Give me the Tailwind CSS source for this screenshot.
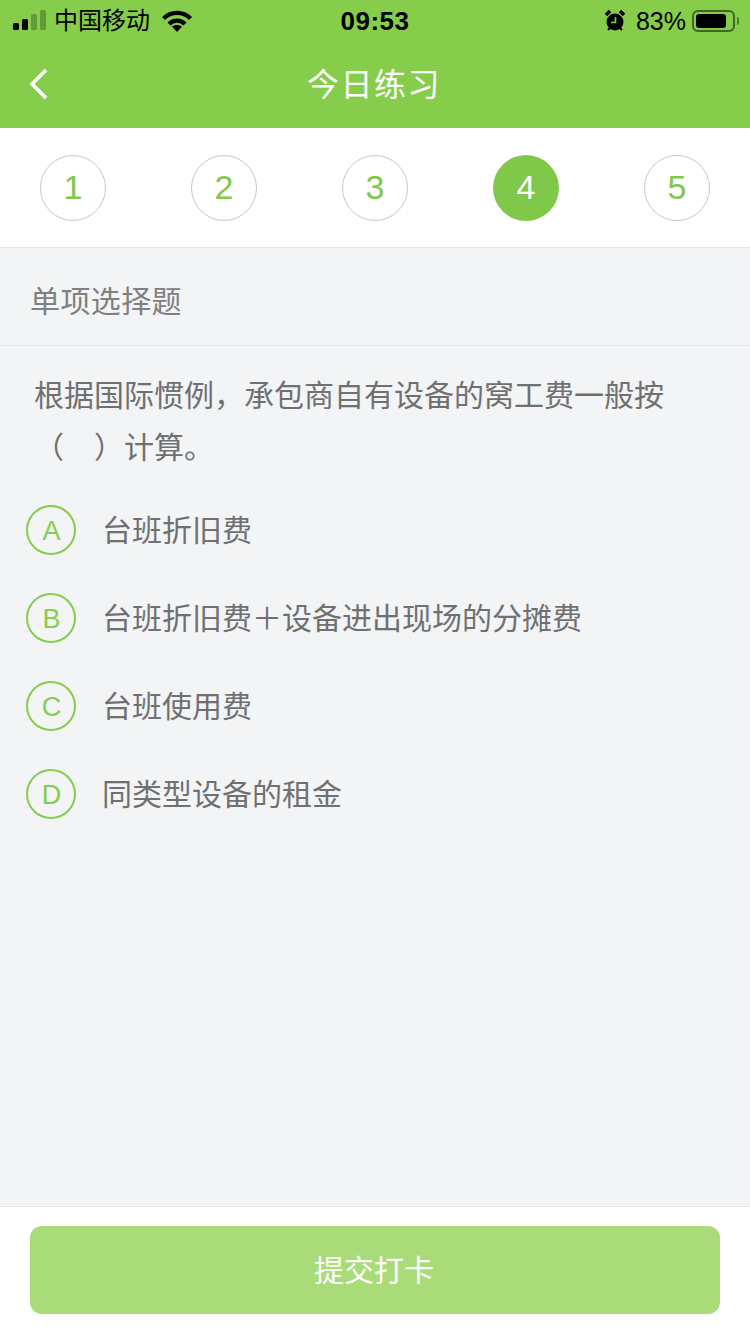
<!DOCTYPE html>
<html lang="zh">
<head>
    <meta charset="UTF-8">
    <meta name="viewport" content="width=device-width, initial-scale=1.0">
    <title>今日练习</title>
    <script src="https://cdn.jsdelivr.net/npm/@tailwindcss/browser@4"></script>
</head>
<body class="w-[750px] h-[1334px] overflow-hidden flex flex-col bg-[#f2f4f6] font-['Liberation_Sans','Noto_Sans_CJK_SC',sans-serif]">

    <!-- Header -->
    <header class="h-[128px] shrink-0 overflow-hidden bg-[#86cd4b] flex flex-col">
        <div class="h-[42px] shrink-0 flex items-center justify-between pl-[13px] pr-[11px] text-black">
            <div class="flex items-center">
                <svg width="34" height="22" viewBox="0 0 34 22" fill="#000">
                    <rect x="0" y="13" width="6" height="7" rx="1.5"/>
                    <rect x="9" y="9" width="6" height="11" rx="1.5"/>
                    <rect x="18" y="4" width="6" height="16" rx="1.5" fill-opacity="0.25"/>
                    <rect x="27" y="0" width="6" height="20" rx="1.5" fill-opacity="0.25"/>
                </svg>
                <span class="ml-[7px] text-[24px] leading-[32px]">中国移动</span>
                <svg class="ml-[12px]" width="30" height="22" viewBox="0 0 30 22" fill="none" stroke="#000" stroke-width="4.4">
                    <path d="M1.5 8.5 C9 1 21 1 28.5 8.5"/>
                    <path d="M7 14 C11.5 9.5 18.5 9.5 23 14"/>
                    <path d="M10 16.5 L15 22 L20 16.5 C17 14.5 13 14.5 10 16.5 Z" fill="#000" stroke="none"/>
                </svg>
            </div>
            <span class="absolute left-0 w-[750px] text-center text-[26px] font-bold leading-[32px] tracking-[0.5px]">09:53</span>
            <div class="flex items-center">
                <svg width="22" height="24" viewBox="0 0 22 24">
                    <circle cx="11" cy="13" r="8.5" fill="#000"/>
                    <path d="M2 6 L6 2 M16 2 L20 6" stroke="#000" stroke-width="3.5"/>
                    <path d="M4 21 L6 19 M18 21 L16 19" stroke="#000" stroke-width="2"/>
                    <path d="M11.5 8 V13.5 H7" stroke="#86cd4b" stroke-width="1.6" fill="none"/>
                </svg>
                <span class="ml-[10px] text-[25px] leading-[32px]">83%</span>
                <div class="ml-[6px] w-[43px] h-[22px] rounded-[6px] border-2 border-black/50 p-[2px]">
                    <div class="w-[30px] h-full rounded-[3px] bg-black"></div>
                </div>
                <div class="ml-[2px] w-[2px] h-[8px] rounded-r-sm bg-black/40"></div>
            </div>
        </div>
        <div class="relative h-[88px] shrink-0 flex items-center justify-center pr-[2px] -mt-[1px]">
            <svg class="absolute left-[28px] top-[26px]" width="22" height="34" viewBox="0 0 22 34" fill="none" stroke="#fff" stroke-width="3.6">
                <path d="M18 3 L4 17 L18 31"/>
            </svg>
            <h1 class="text-white text-[32px] leading-[40px] tracking-[1.5px]">今日练习</h1>
        </div>
    </header>

    <!-- Question numbers -->
    <nav class="h-[120px] shrink-0 bg-white border-b border-[#e6e6e6] flex items-center justify-between px-[40px] text-[34px] text-[#80c84a]">
        <div class="w-[66px] h-[66px] rounded-full border border-[#c8c8c8] flex items-center justify-center">1</div>
        <div class="w-[66px] h-[66px] rounded-full border border-[#c8c8c8] flex items-center justify-center">2</div>
        <div class="w-[66px] h-[66px] rounded-full border border-[#c8c8c8] flex items-center justify-center">3</div>
        <div class="w-[66px] h-[66px] rounded-full bg-[#80c84a] text-white flex items-center justify-center">4</div>
        <div class="w-[66px] h-[66px] rounded-full border border-[#c8c8c8] flex items-center justify-center">5</div>
    </nav>

    <!-- Question -->
    <main class="flex-1">
        <div class="h-[98px] border-b border-[#e6e7e9] flex items-center pl-[30px] pt-[10px] text-[30px] tracking-[0.4px] text-[#808080]">单项选择题</div>
        <p class="mt-[24px] pl-[34px] pr-[35px] text-[30px] leading-[52px] text-[#707070]">根据国际惯例，承包商自有设备的窝工费一般按<br>（<span class="inline-block w-[30px]"></span>）计算。</p>

        <ul class="mt-[12px] pl-[26px] text-[30px] text-[#707070]">
            <li class="h-[88px] flex items-center">
                <span class="w-[50px] h-[50px] rounded-full border-2 border-[#86cd4b] flex items-center justify-center pt-[3px] pl-[1px] text-[27px] text-[#86cd4b]">A</span>
                <span class="ml-[26px]">台班折旧费</span>
            </li>
            <li class="h-[88px] flex items-center">
                <span class="w-[50px] h-[50px] rounded-full border-2 border-[#86cd4b] flex items-center justify-center pt-[3px] pl-[1px] text-[27px] text-[#86cd4b]">B</span>
                <span class="ml-[26px]">台班折旧费＋设备进出现场的分摊费</span>
            </li>
            <li class="h-[88px] flex items-center">
                <span class="w-[50px] h-[50px] rounded-full border-2 border-[#86cd4b] flex items-center justify-center pt-[3px] pl-[1px] text-[27px] text-[#86cd4b]">C</span>
                <span class="ml-[26px]">台班使用费</span>
            </li>
            <li class="h-[88px] flex items-center">
                <span class="w-[50px] h-[50px] rounded-full border-2 border-[#86cd4b] flex items-center justify-center pt-[3px] pl-[1px] text-[27px] text-[#86cd4b]">D</span>
                <span class="ml-[26px]">同类型设备的租金</span>
            </li>
        </ul>
    </main>

    <!-- Submit -->
    <footer class="h-[128px] shrink-0 bg-white border-t border-[#e6e7e9] pt-[19px] px-[30px]">
        <button class="w-[690px] h-[88px] rounded-[12px] bg-[#a9dc78] text-white text-[30px] pr-[2px]">提交打卡</button>
    </footer>

</body>
</html>
